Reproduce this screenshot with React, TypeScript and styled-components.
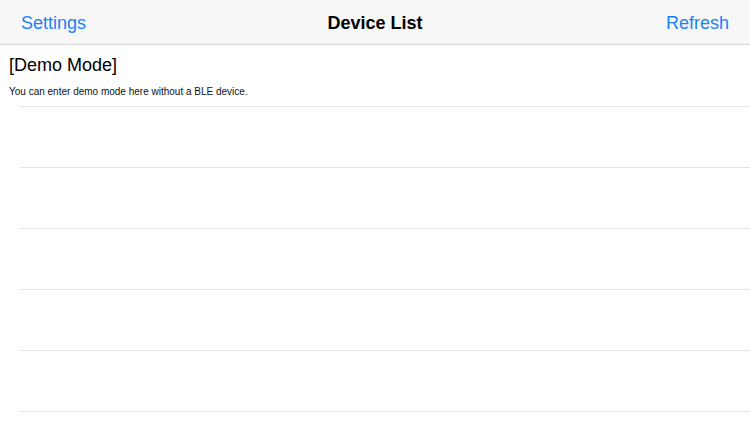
import React from "react";
import styled, { createGlobalStyle } from "styled-components";

const Global = createGlobalStyle`
  html, body { margin: 0; padding: 0; background: #ffffff; }
  body { font-family: "Liberation Sans", Arial, sans-serif; -webkit-font-smoothing: antialiased; }
`;

const Page = styled.div`
  width: 750px;
  height: 422px;
  overflow: hidden;
  display: flex;
  flex-direction: column;
  background: #ffffff;
`;

const NavBar = styled.div`
  box-sizing: border-box;
  height: 45px;
  flex: 0 0 45px;
  background: #f7f7f7;
  border-bottom: 1px solid #d6d6d6;
  display: grid;
  grid-template-columns: 1fr auto 1fr;
  align-items: center;
  padding: 3px 21px 0 21px;
`;

const NavButton = styled.div<{ $align: "left" | "right" }>`
  color: #1b82f6;
  font-size: 18px;
  justify-self: ${(p) => (p.$align === "left" ? "start" : "end")};
`;

const NavTitle = styled.div`
  color: #000;
  font-size: 18px;
  font-weight: bold;
`;

const Header = styled.div`
  padding: 9px 9px 0 9px;
  display: flex;
  flex-direction: column;
`;

const HeaderTitle = styled.div`
  font-size: 18px;
  color: #000;
  line-height: 22px;
`;

const HeaderText = styled.div`
  font-size: 10px;
  color: #111;
  margin-top: 10px;
  line-height: 12px;
`;

const List = styled.div`
  margin-top: 8px;
  padding-left: 20px;
  display: flex;
  flex-direction: column;
`;

const Row = styled.div`
  height: 60px;
  border-top: 1px solid #e4e4e4;
`;

export default function App() {
  return (
    <Page>
      <Global />
      <NavBar>
        <NavButton $align="left">Settings</NavButton>
        <NavTitle>Device List</NavTitle>
        <NavButton $align="right">Refresh</NavButton>
      </NavBar>
      <Header>
        <HeaderTitle>[Demo Mode]</HeaderTitle>
        <HeaderText>You can enter demo mode here without a BLE device.</HeaderText>
      </Header>
      <List>
        {[0, 1, 2, 3, 4, 5].map((i) => (
          <Row key={i} />
        ))}
      </List>
    </Page>
  );
}
